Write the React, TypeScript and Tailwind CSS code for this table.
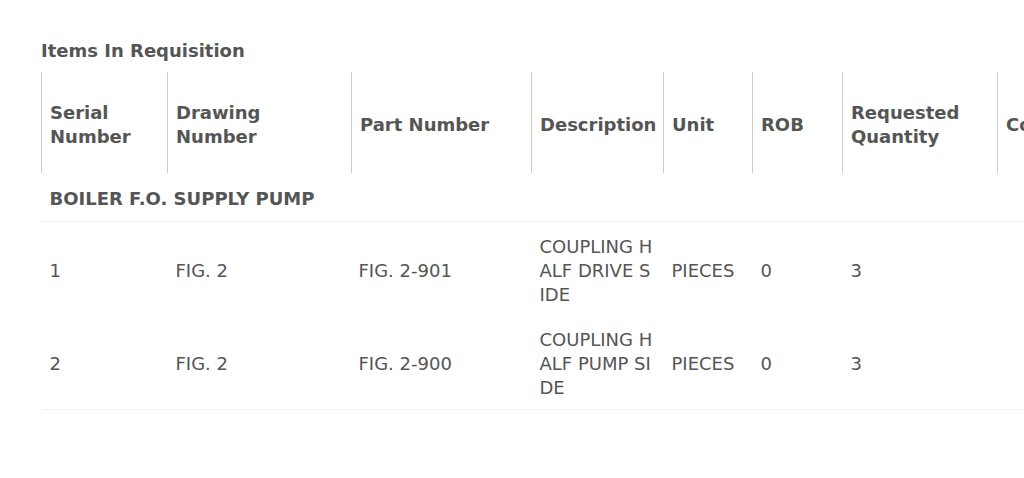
import React from "react";

type Item = {
  serial: string;
  drawing: string;
  part: string;
  description: string;
  unit: string;
  rob: string;
  qty: string;
  comments: string;
};

const items: Item[] = [
  { serial: "1", drawing: "FIG. 2", part: "FIG. 2-901", description: "COUPLING HALF DRIVE SIDE", unit: "PIECES", rob: "0", qty: "3", comments: "" },
  { serial: "2", drawing: "FIG. 2", part: "FIG. 2-900", description: "COUPLING HALF PUMP SIDE", unit: "PIECES", rob: "0", qty: "3", comments: "" },
];

const headers: { label: React.ReactNode; w: string }[] = [
  { label: <>Serial<br />Number</>, w: "w-[126px]" },
  { label: <>Drawing<br />Number</>, w: "w-[184px]" },
  { label: "Part Number", w: "w-[180px]" },
  { label: "Description", w: "w-[132px]" },
  { label: "Unit", w: "w-[89px]" },
  { label: "ROB", w: "w-[90px]" },
  { label: <>Requested<br />Quantity</>, w: "w-[155px]" },
  { label: "Comments", w: "w-[160px]" },
];

export default function App() {
  return (
    <div
      className="min-h-[478px] w-full overflow-hidden bg-white pl-[41px] pt-[38px] text-[#555]"
      style={{ fontFamily: "Tahoma, 'DejaVu Sans', sans-serif" }}
    >
      <h2 className="text-[18px] font-bold leading-[26px]">Items In Requisition</h2>
      <table className="mt-[8px] w-[1116px] table-fixed border-collapse">
        <thead>
          <tr className="h-[101px]">
            {headers.map((h, i) => (
              <th
                key={i}
                className={`${h.w} border-l border-[#ccc] px-[8px] pt-[4px] text-left align-middle text-[18px] font-bold leading-[24px] whitespace-nowrap`}
              >
                {h.label}
              </th>
            ))}
          </tr>
        </thead>
        <tbody className="text-[18px] leading-[24px]">
          <tr className="h-[48px] border-b border-[#eee]">
            <td colSpan={8} className="px-[8px] pt-[4px] align-middle text-[18px] font-bold">
              BOILER F.O. SUPPLY PUMP
            </td>
          </tr>
          {items.map((it, idx) => (
            <tr
              key={it.serial}
              className={`h-[94px] ${idx === items.length - 1 ? "border-b border-[#eee]" : ""}`}
            >
              <td className="px-[8px] pt-[5px] align-middle">{it.serial}</td>
              <td className="px-[8px] pt-[5px] align-middle">{it.drawing}</td>
              <td className="px-[7px] pt-[5px] align-middle">{it.part}</td>
              <td className="px-[8px] pt-[5px] align-middle">
                <div className="w-[114px] break-all">{it.description}</div>
              </td>
              <td className="px-[8px] pt-[5px] align-middle">{it.unit}</td>
              <td className="px-[8px] pt-[5px] align-middle">{it.rob}</td>
              <td className="px-[8px] pt-[5px] align-middle">{it.qty}</td>
              <td className="px-[8px] pt-[5px] align-middle">{it.comments}</td>
            </tr>
          ))}
        </tbody>
      </table>
    </div>
  );
}
